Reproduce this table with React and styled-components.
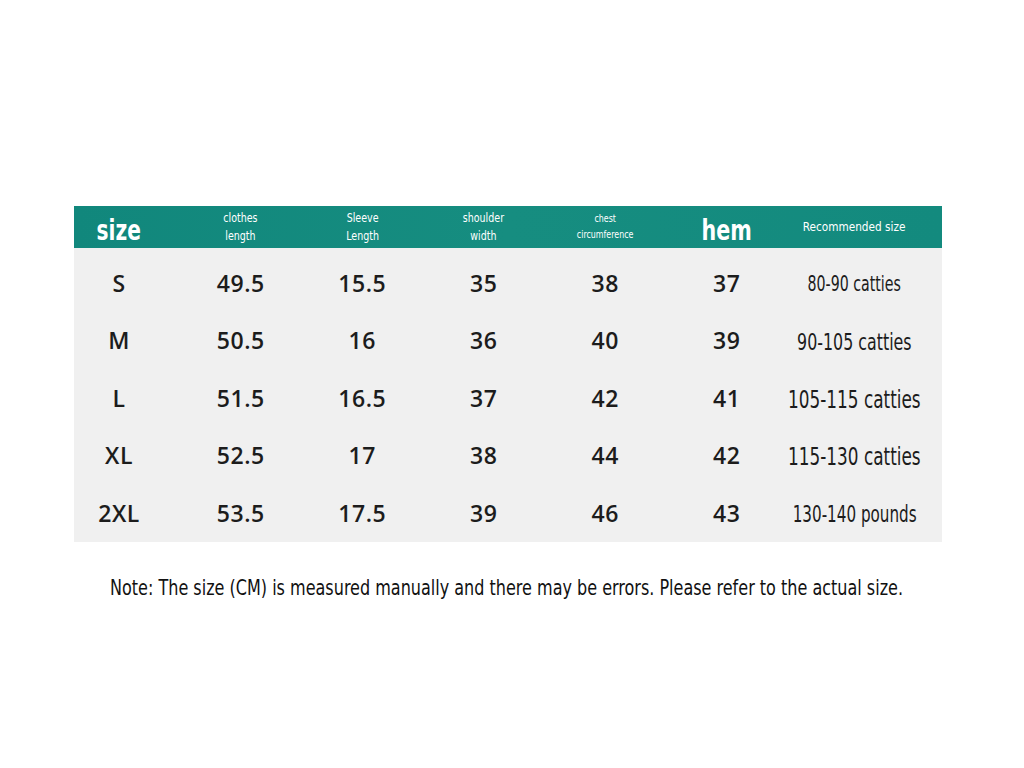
import styled, { createGlobalStyle } from "styled-components";

const GlobalStyle = createGlobalStyle`
  html, body {
    margin: 0;
    padding: 0;
    background: #ffffff;
  }
`;

const narrow = `"DejaVu Sans Condensed", "DejaVu Sans", sans-serif`;

const Page = styled.div`
  width: 1024px;
  height: 768px;
  padding-top: 206px;
  box-sizing: border-box;
  overflow: hidden;
  display: flex;
  flex-direction: column;
  align-items: flex-start;
`;

const Table = styled.div`
  margin-left: 74px;
  width: 868px;
`;

const Columns = `
  display: grid;
  grid-template-columns: 106px repeat(5, 121.5px) 154px;
  align-items: center;
`;

const Header = styled.div`
  ${Columns}
  height: 42px;
  background: linear-gradient(90deg, #11877c 0%, #168d80 50%, #138a7e 100%);
  color: #ffffff;
`;

// condensed text: the installed fonts are wider than the picture's, so squeeze them
const Squeeze = styled.span`
  display: inline-block;
  flex-shrink: 0;
  white-space: nowrap;
  transform: scaleX(${(p) => p.$sx || 0.8});
  transform-origin: ${(p) => p.$origin || "center"};
`;

const HeadCell = styled.div`
  display: flex;
  justify-content: center;
  text-align: center;
  font-family: ${narrow};
  font-stretch: condensed;
  font-size: ${(p) => p.$size || 12}px;
  line-height: ${(p) => p.$line || 18}px;
  padding-right: ${(p) => p.$pr || 0}px;
`;

const BigHead = styled.div`
  align-self: end;
  margin-bottom: 3px;
  display: flex;
  justify-content: center;
  font-family: ${narrow};
  font-stretch: condensed;
  font-weight: 700;
  font-size: 28px;
  line-height: 28px;
  padding-right: ${(p) => p.$pr || 0}px;
`;

const Body = styled.div`
  background: #f0f0f0;
  padding: 6px 0 0;
`;

const Row = styled.div`
  ${Columns}
  height: 57.5px;
`;

const Num = styled.div`
  text-align: center;
  font-family: "Open Sans", "Noto Sans", sans-serif;
  font-weight: 600;
  font-size: 23px;
  letter-spacing: 0.5px;
  color: #1c1c1c;
  padding-right: ${(p) => p.$pr || 0}px;
`;

const Rec = styled.div`
  display: flex;
  justify-content: center;
  font-family: ${narrow};
  font-stretch: condensed;
  font-size: ${(p) => p.$size}px;
  color: #1c1c1c;
  padding-right: 20px;
  padding-top: 3px;
`;

const Note = styled.p`
  margin: 33px 0 0 110px;
  font-family: ${narrow};
  font-stretch: condensed;
  font-size: 22px;
  color: #111111;
`;

const rows = [
  ["S", "49.5", "15.5", "35", "38", "37", "80-90 catties", 21],
  ["M", "50.5", "16", "36", "40", "39", "90-105 catties", 23.5],
  ["L", "51.5", "16.5", "37", "42", "41", "105-115 catties", 25],
  ["XL", "52.5", "17", "38", "44", "42", "115-130 catties", 25],
  ["2XL", "53.5", "17.5", "39", "46", "43", "130-140 pounds", 22.5],
];

const App = () => {
  return (
    <Page>
      <GlobalStyle />
      <Table>
        <Header>
          <BigHead $pr={16}><Squeeze $sx={0.8}>size</Squeeze></BigHead>
          <HeadCell><Squeeze $sx={0.88}>clothes<br />length</Squeeze></HeadCell>
          <HeadCell><Squeeze $sx={0.88}>Sleeve<br />Length</Squeeze></HeadCell>
          <HeadCell><Squeeze $sx={0.88}>shoulder<br />width</Squeeze></HeadCell>
          <HeadCell $size={10} $line={16}><Squeeze $sx={0.88}>chest<br />circumference</Squeeze></HeadCell>
          <BigHead><Squeeze $sx={0.82}>hem</Squeeze></BigHead>
          <HeadCell $size={13} $pr={20}><Squeeze $sx={0.9}>Recommended size</Squeeze></HeadCell>
        </Header>
        <Body>
          {rows.map((r) => (
            <Row key={r[0]}>
              <Num $pr={16}>{r[0]}</Num>
              <Num>{r[1]}</Num>
              <Num>{r[2]}</Num>
              <Num>{r[3]}</Num>
              <Num>{r[4]}</Num>
              <Num>{r[5]}</Num>
              <Rec $size={r[7]}><Squeeze $sx={0.75}>{r[6]}</Squeeze></Rec>
            </Row>
          ))}
        </Body>
      </Table>
      <Note>
        <Squeeze $sx={0.81} $origin="left">
          Note: The size (CM) is measured manually and there may be errors. Please refer to the actual size.
        </Squeeze>
      </Note>
    </Page>
  );
};

export default App;
